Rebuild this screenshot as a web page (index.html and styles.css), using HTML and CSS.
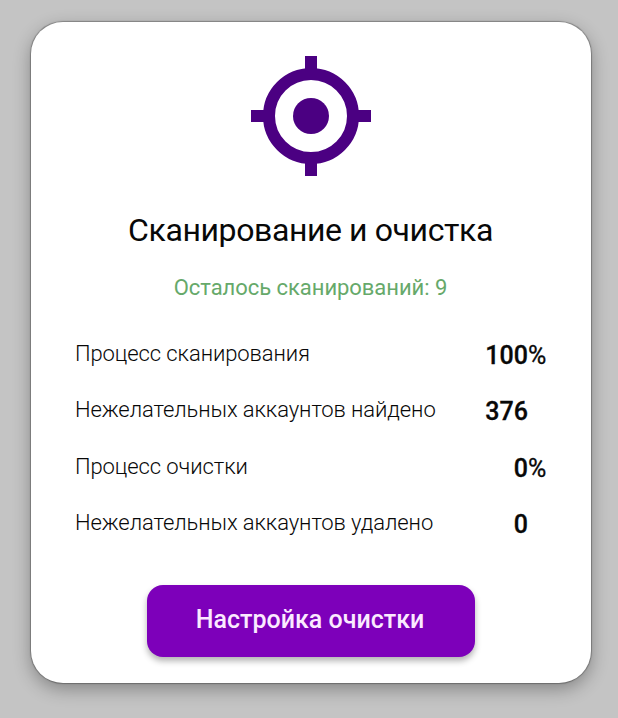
FILE: index.html
```html
<!DOCTYPE html>
<html lang="ru">
<head>
<meta charset="utf-8">
<title>Сканирование и очистка</title>
<link rel="stylesheet" href="styles.css">
</head>
<body>
<main class="card">
  <svg class="icon" viewBox="0 0 120 120" aria-hidden="true">
    <circle cx="60" cy="60" r="42" fill="none" stroke="currentColor" stroke-width="12"/>
    <circle cx="60" cy="60" r="18" fill="currentColor"/>
    <path d="M54 0h12v16H54zM54 104h12v16H54zM0 54h16v12H0zM104 54h16v12h-16z" fill="currentColor"/>
  </svg>
  <h1 class="title">Сканирование и очистка</h1>
  <p class="remaining">Осталось сканирований: 9</p>
  <dl class="stats">
    <div class="row"><dt>Процесс сканирования</dt><dd><span class="num">100</span><span class="unit">%</span></dd></div>
    <div class="row"><dt>Нежелательных аккаунтов найдено</dt><dd><span class="num">376</span><span class="unit"></span></dd></div>
    <div class="row"><dt>Процесс очистки</dt><dd><span class="num">0</span><span class="unit">%</span></dd></div>
    <div class="row"><dt>Нежелательных аккаунтов удалено</dt><dd><span class="num">0</span><span class="unit"></span></dd></div>
  </dl>
  <button class="button" type="button">Настройка очистки</button>
</main>
</body>
</html>
```
FILE: styles.css
```css
* { box-sizing: border-box; }
body {
  margin: 0;
  height: 718px;
  padding: 22px 27px 35px 31px;
  background: #c4c4c4;
  font-family: Roboto, sans-serif;
  color: #080808;
}
.card {
  height: 661px;
  padding: 34px 44px 0;
  display: flex;
  flex-direction: column;
  align-items: center;
  background: #fff;
  border-radius: 32px;
  box-shadow: 0 0 1px 1px rgba(0, 0, 0, .28), 0 6px 18px rgba(0, 0, 0, .32);
}
.icon { width: 120px; height: 120px; color: #4b0082; flex: none; }
.title { margin: 34px 1px 0 0; font-size: 32px; line-height: 40px; font-weight: 400; letter-spacing: -.4px; white-space: nowrap; }
.remaining { margin: 23px 1px 0 0; font-size: 22px; line-height: 30px; letter-spacing: -.05px; color: #66a96a; white-space: nowrap; }
.stats { margin: 23px 0 0; width: 100%; }
.row { height: 56.4px; display: flex; justify-content: space-between; align-items: center; white-space: nowrap; }
dt { font-size: 22px; font-weight: 300; letter-spacing: -.09px; padding-bottom: 1.6px; }
dd { margin: 0; display: flex; font-size: 25px; font-weight: 500; padding-top: 2.4px; }
.num { -webkit-text-stroke: .3px currentColor; }
.unit { width: 19px; font-weight: 400; -webkit-text-stroke: .3px currentColor; }
.button {
  margin-top: 33.4px;
  width: 328px;
  height: 72px;
  padding: 0 2px 2px 0;
  flex: none;
  border: 0;
  border-radius: 16px;
  background: #7d00ba;
  color: #fbeaff;
  font: 500 25px Roboto, sans-serif;
  box-shadow: 0 4px 6px rgba(0, 0, 0, .3);
}
```
